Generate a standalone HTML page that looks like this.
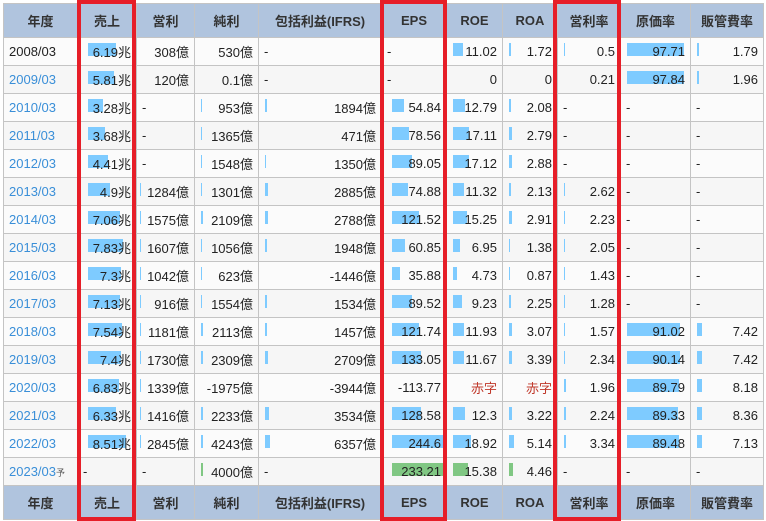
<!DOCTYPE html><html><head><meta charset="utf-8"><style>
body{margin:0;background:#fff;font-family:"Liberation Sans","Noto Sans CJK JP",sans-serif;}
table{position:absolute;left:3px;top:3px;border-collapse:collapse;table-layout:fixed;font-size:13px;color:#222}
td,th{border:1px solid #c4c4c4;padding:0 5px;position:relative;white-space:nowrap;overflow:hidden}
th{background:#b0c4de;height:33px;font-weight:bold;color:#333;text-align:center;font-size:13px}
td{height:27px;text-align:right;background:#f6f6f6}
tr:nth-child(even) td{background:#fbfbfb}
td.l{text-align:left}
td.y{text-align:left;color:#3a8fd8}
td.y0{color:#222}
i{position:absolute;left:6px;top:5px;height:13px;background:#7ecbff;z-index:0}
td.s i{left:10px}
i.g{background:#80c783}
td span{position:relative;z-index:1}
.r{color:#c0392b}
.box{position:absolute;top:0;height:513px;border:4px solid #e61e28;}
small{font-size:9px;color:#555}
</style></head><body>
<table>
<colgroup><col style="width:74px"><col style="width:59px"><col style="width:58px"><col style="width:64px"><col style="width:123px"><col style="width:65px"><col style="width:56px"><col style="width:55px"><col style="width:63px"><col style="width:70px"><col style="width:73px"></colgroup>
<tr><th>年度</th><th>売上</th><th>営利</th><th>純利</th><th>包括利益(IFRS)</th><th>EPS</th><th>ROE</th><th>ROA</th><th>営利率</th><th>原価率</th><th>販管費率</th></tr>
<tr><td class="y y0">2008/03</td><td class="s"><i style="width:28px"></i><span>6.19兆</span></td><td>308億</td><td>530億</td><td class="l">-</td><td class="l">-</td><td><i style="width:10px"></i><span>11.02</span></td><td><i style="width:2px"></i><span>1.72</span></td><td><i style="width:1px"></i><span>0.5</span></td><td><i style="width:57px"></i><span>97.71</span></td><td><i style="width:2px"></i><span>1.79</span></td></tr>
<tr><td class="y">2009/03</td><td class="s"><i style="width:26px"></i><span>5.81兆</span></td><td>120億</td><td>0.1億</td><td class="l">-</td><td class="l">-</td><td>0</td><td>0</td><td>0.21</td><td><i style="width:57px"></i><span>97.84</span></td><td><i style="width:2px"></i><span>1.96</span></td></tr>
<tr><td class="y">2010/03</td><td class="s"><i style="width:15px"></i><span>3.28兆</span></td><td class="l">-</td><td><i style="width:1px"></i><span>953億</span></td><td><i style="width:2px"></i><span>1894億</span></td><td class="s"><i style="width:12px"></i><span>54.84</span></td><td><i style="width:12px"></i><span>12.79</span></td><td><i style="width:2px"></i><span>2.08</span></td><td class="l">-</td><td class="l">-</td><td class="l">-</td></tr>
<tr><td class="y">2011/03</td><td class="s"><i style="width:17px"></i><span>3.68兆</span></td><td class="l">-</td><td><i style="width:1px"></i><span>1365億</span></td><td>471億</td><td class="s"><i style="width:17px"></i><span>78.56</span></td><td><i style="width:16px"></i><span>17.11</span></td><td><i style="width:3px"></i><span>2.79</span></td><td class="l">-</td><td class="l">-</td><td class="l">-</td></tr>
<tr><td class="y">2012/03</td><td class="s"><i style="width:20px"></i><span>4.41兆</span></td><td class="l">-</td><td><i style="width:1px"></i><span>1548億</span></td><td><i style="width:1px"></i><span>1350億</span></td><td class="s"><i style="width:20px"></i><span>89.05</span></td><td><i style="width:16px"></i><span>17.12</span></td><td><i style="width:3px"></i><span>2.88</span></td><td class="l">-</td><td class="l">-</td><td class="l">-</td></tr>
<tr><td class="y">2013/03</td><td class="s"><i style="width:22px"></i><span>4.9兆</span></td><td><i style="width:1px;left:3px"></i><span>1284億</span></td><td><i style="width:1px"></i><span>1301億</span></td><td><i style="width:3px"></i><span>2885億</span></td><td class="s"><i style="width:16px"></i><span>74.88</span></td><td><i style="width:11px"></i><span>11.32</span></td><td><i style="width:2px"></i><span>2.13</span></td><td><i style="width:1px"></i><span>2.62</span></td><td class="l">-</td><td class="l">-</td></tr>
<tr><td class="y">2014/03</td><td class="s"><i style="width:32px"></i><span>7.06兆</span></td><td><i style="width:1px;left:3px"></i><span>1575億</span></td><td><i style="width:2px"></i><span>2109億</span></td><td><i style="width:3px"></i><span>2788億</span></td><td class="s"><i style="width:27px"></i><span>121.52</span></td><td><i style="width:14px"></i><span>15.25</span></td><td><i style="width:3px"></i><span>2.91</span></td><td><i style="width:1px"></i><span>2.23</span></td><td class="l">-</td><td class="l">-</td></tr>
<tr><td class="y">2015/03</td><td class="s"><i style="width:35px"></i><span>7.83兆</span></td><td><i style="width:1px;left:3px"></i><span>1607億</span></td><td><i style="width:1px"></i><span>1056億</span></td><td><i style="width:2px"></i><span>1948億</span></td><td class="s"><i style="width:13px"></i><span>60.85</span></td><td><i style="width:7px"></i><span>6.95</span></td><td><i style="width:1px"></i><span>1.38</span></td><td><i style="width:1px"></i><span>2.05</span></td><td class="l">-</td><td class="l">-</td></tr>
<tr><td class="y">2016/03</td><td class="s"><i style="width:33px"></i><span>7.3兆</span></td><td><i style="width:1px;left:3px"></i><span>1042億</span></td><td><i style="width:1px"></i><span>623億</span></td><td>-1446億</td><td class="s"><i style="width:8px"></i><span>35.88</span></td><td><i style="width:4px"></i><span>4.73</span></td><td><i style="width:1px"></i><span>0.87</span></td><td><i style="width:1px"></i><span>1.43</span></td><td class="l">-</td><td class="l">-</td></tr>
<tr><td class="y">2017/03</td><td class="s"><i style="width:32px"></i><span>7.13兆</span></td><td><i style="width:1px;left:3px"></i><span>916億</span></td><td><i style="width:1px"></i><span>1554億</span></td><td><i style="width:2px"></i><span>1534億</span></td><td class="s"><i style="width:20px"></i><span>89.52</span></td><td><i style="width:9px"></i><span>9.23</span></td><td><i style="width:2px"></i><span>2.25</span></td><td><i style="width:1px"></i><span>1.28</span></td><td class="l">-</td><td class="l">-</td></tr>
<tr><td class="y">2018/03</td><td class="s"><i style="width:34px"></i><span>7.54兆</span></td><td><i style="width:1px;left:3px"></i><span>1181億</span></td><td><i style="width:2px"></i><span>2113億</span></td><td><i style="width:2px"></i><span>1457億</span></td><td class="s"><i style="width:27px"></i><span>121.74</span></td><td><i style="width:11px"></i><span>11.93</span></td><td><i style="width:3px"></i><span>3.07</span></td><td><i style="width:1px"></i><span>1.57</span></td><td><i style="width:53px"></i><span>91.02</span></td><td><i style="width:5px"></i><span>7.42</span></td></tr>
<tr><td class="y">2019/03</td><td class="s"><i style="width:33px"></i><span>7.4兆</span></td><td><i style="width:1px;left:3px"></i><span>1730億</span></td><td><i style="width:2px"></i><span>2309億</span></td><td><i style="width:3px"></i><span>2709億</span></td><td class="s"><i style="width:29px"></i><span>133.05</span></td><td><i style="width:11px"></i><span>11.67</span></td><td><i style="width:3px"></i><span>3.39</span></td><td><i style="width:1px"></i><span>2.34</span></td><td><i style="width:53px"></i><span>90.14</span></td><td><i style="width:5px"></i><span>7.42</span></td></tr>
<tr><td class="y">2020/03</td><td class="s"><i style="width:31px"></i><span>6.83兆</span></td><td><i style="width:1px;left:3px"></i><span>1339億</span></td><td>-1975億</td><td>-3944億</td><td>-113.77</td><td class="r">赤字</td><td class="r">赤字</td><td><i style="width:2px"></i><span>1.96</span></td><td><i style="width:52px"></i><span>89.79</span></td><td><i style="width:5px"></i><span>8.18</span></td></tr>
<tr><td class="y">2021/03</td><td class="s"><i style="width:28px"></i><span>6.33兆</span></td><td><i style="width:1px;left:3px"></i><span>1416億</span></td><td><i style="width:2px"></i><span>2233億</span></td><td><i style="width:4px"></i><span>3534億</span></td><td class="s"><i style="width:29px"></i><span>128.58</span></td><td><i style="width:12px"></i><span>12.3</span></td><td><i style="width:3px"></i><span>3.22</span></td><td><i style="width:2px"></i><span>2.24</span></td><td><i style="width:51px"></i><span>89.33</span></td><td><i style="width:5px"></i><span>8.36</span></td></tr>
<tr><td class="y">2022/03</td><td class="s"><i style="width:38px"></i><span>8.51兆</span></td><td><i style="width:1px;left:3px"></i><span>2845億</span></td><td><i style="width:2px"></i><span>4243億</span></td><td><i style="width:5px"></i><span>6357億</span></td><td class="s"><i style="width:53px"></i><span>244.6</span></td><td><i style="width:18px"></i><span>18.92</span></td><td><i style="width:5px"></i><span>5.14</span></td><td><i style="width:2px"></i><span>3.34</span></td><td><i style="width:52px"></i><span>89.48</span></td><td><i style="width:5px"></i><span>7.13</span></td></tr>
<tr><td class="y">2023/03<small>予</small></td><td class="l">-</td><td class="l">-</td><td><i class="g" style="width:2px"></i><span>4000億</span></td><td class="l">-</td><td class="s"><i class="g" style="width:51px"></i><span>233.21</span></td><td><i class="g" style="width:15px"></i><span>15.38</span></td><td><i class="g" style="width:4px"></i><span>4.46</span></td><td class="l">-</td><td class="l">-</td><td class="l">-</td></tr>
<tr><th>年度</th><th>売上</th><th>営利</th><th>純利</th><th>包括利益(IFRS)</th><th>EPS</th><th>ROE</th><th>ROA</th><th>営利率</th><th>原価率</th><th>販管費率</th></tr>
</table>
<div class="box" style="left:77px;width:51px"></div>
<div class="box" style="left:380px;width:59px"></div>
<div class="box" style="left:553px;width:60px"></div>
</body></html>
